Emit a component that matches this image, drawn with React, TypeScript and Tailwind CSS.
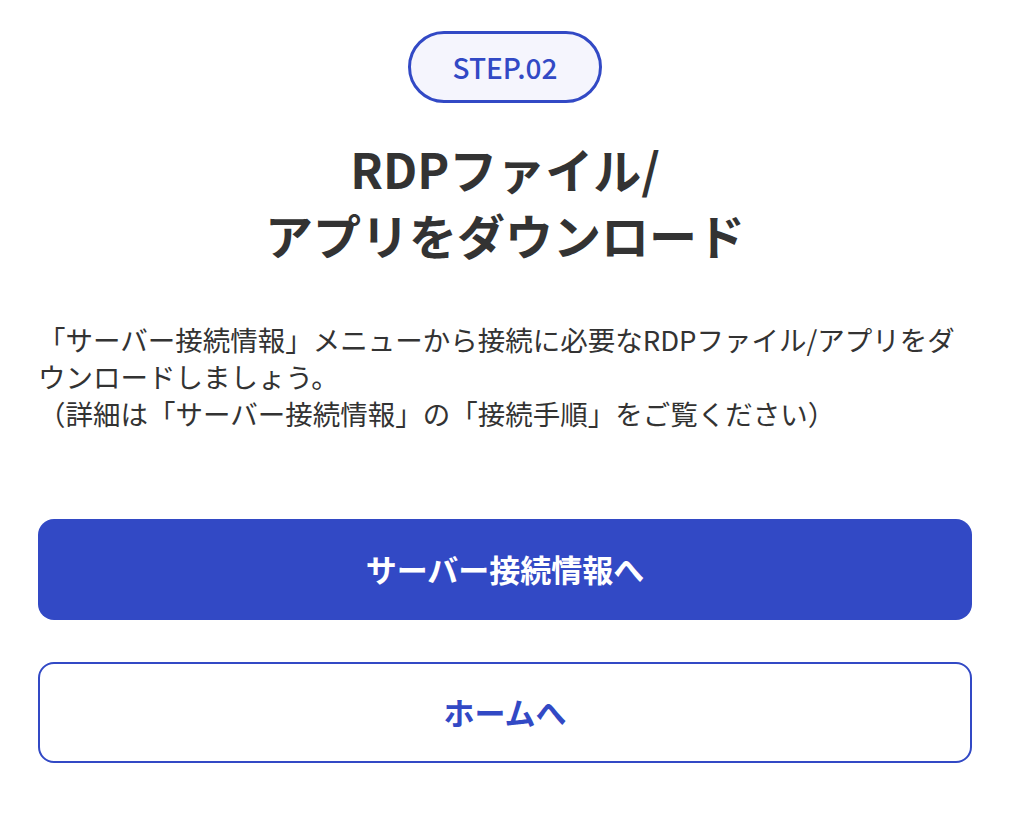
export default function App() {
  return (
    <div className="min-h-[816px] bg-white pl-[38px] pr-[52px] pt-[31px] font-['Noto_Sans_CJK_JP','Noto_Sans',sans-serif] text-[#333]">
      <div className="flex justify-center">
        <span className="flex h-[72px] w-[194px] items-center justify-center rounded-full border-[3px] border-[#3249c5] bg-[#f5f5fd] text-[28px] font-medium text-[#3249c5]">
          STEP.02
        </span>
      </div>

      <h1 className="mt-[32px] text-center text-[48px] font-bold leading-[66px]">
        RDPファイル/
        <br />
        アプリをダウンロード
      </h1>

      <p className="mt-[54px] text-[27.5px] leading-[37px]">
        「サーバー接続情報」メニューから接続に必要なRDPファイル/アプリをダウンロードしましょう。
        <br />
        （詳細は「サーバー接続情報」の「接続手順」をご覧ください）
      </p>

      <div className="mt-[87px] flex flex-col gap-[42px]">
        <button
          type="button"
          className="flex h-[101px] w-full items-center justify-center rounded-[16px] bg-[#3249c5] text-[31px] font-bold text-white"
        >
          サーバー接続情報へ
        </button>
        <button
          type="button"
          className="flex h-[101px] w-full items-center justify-center rounded-[16px] border-2 border-[#3249c5] bg-white text-[31px] font-bold text-[#3249c5]"
        >
          ホームへ
        </button>
      </div>
    </div>
  );
}
